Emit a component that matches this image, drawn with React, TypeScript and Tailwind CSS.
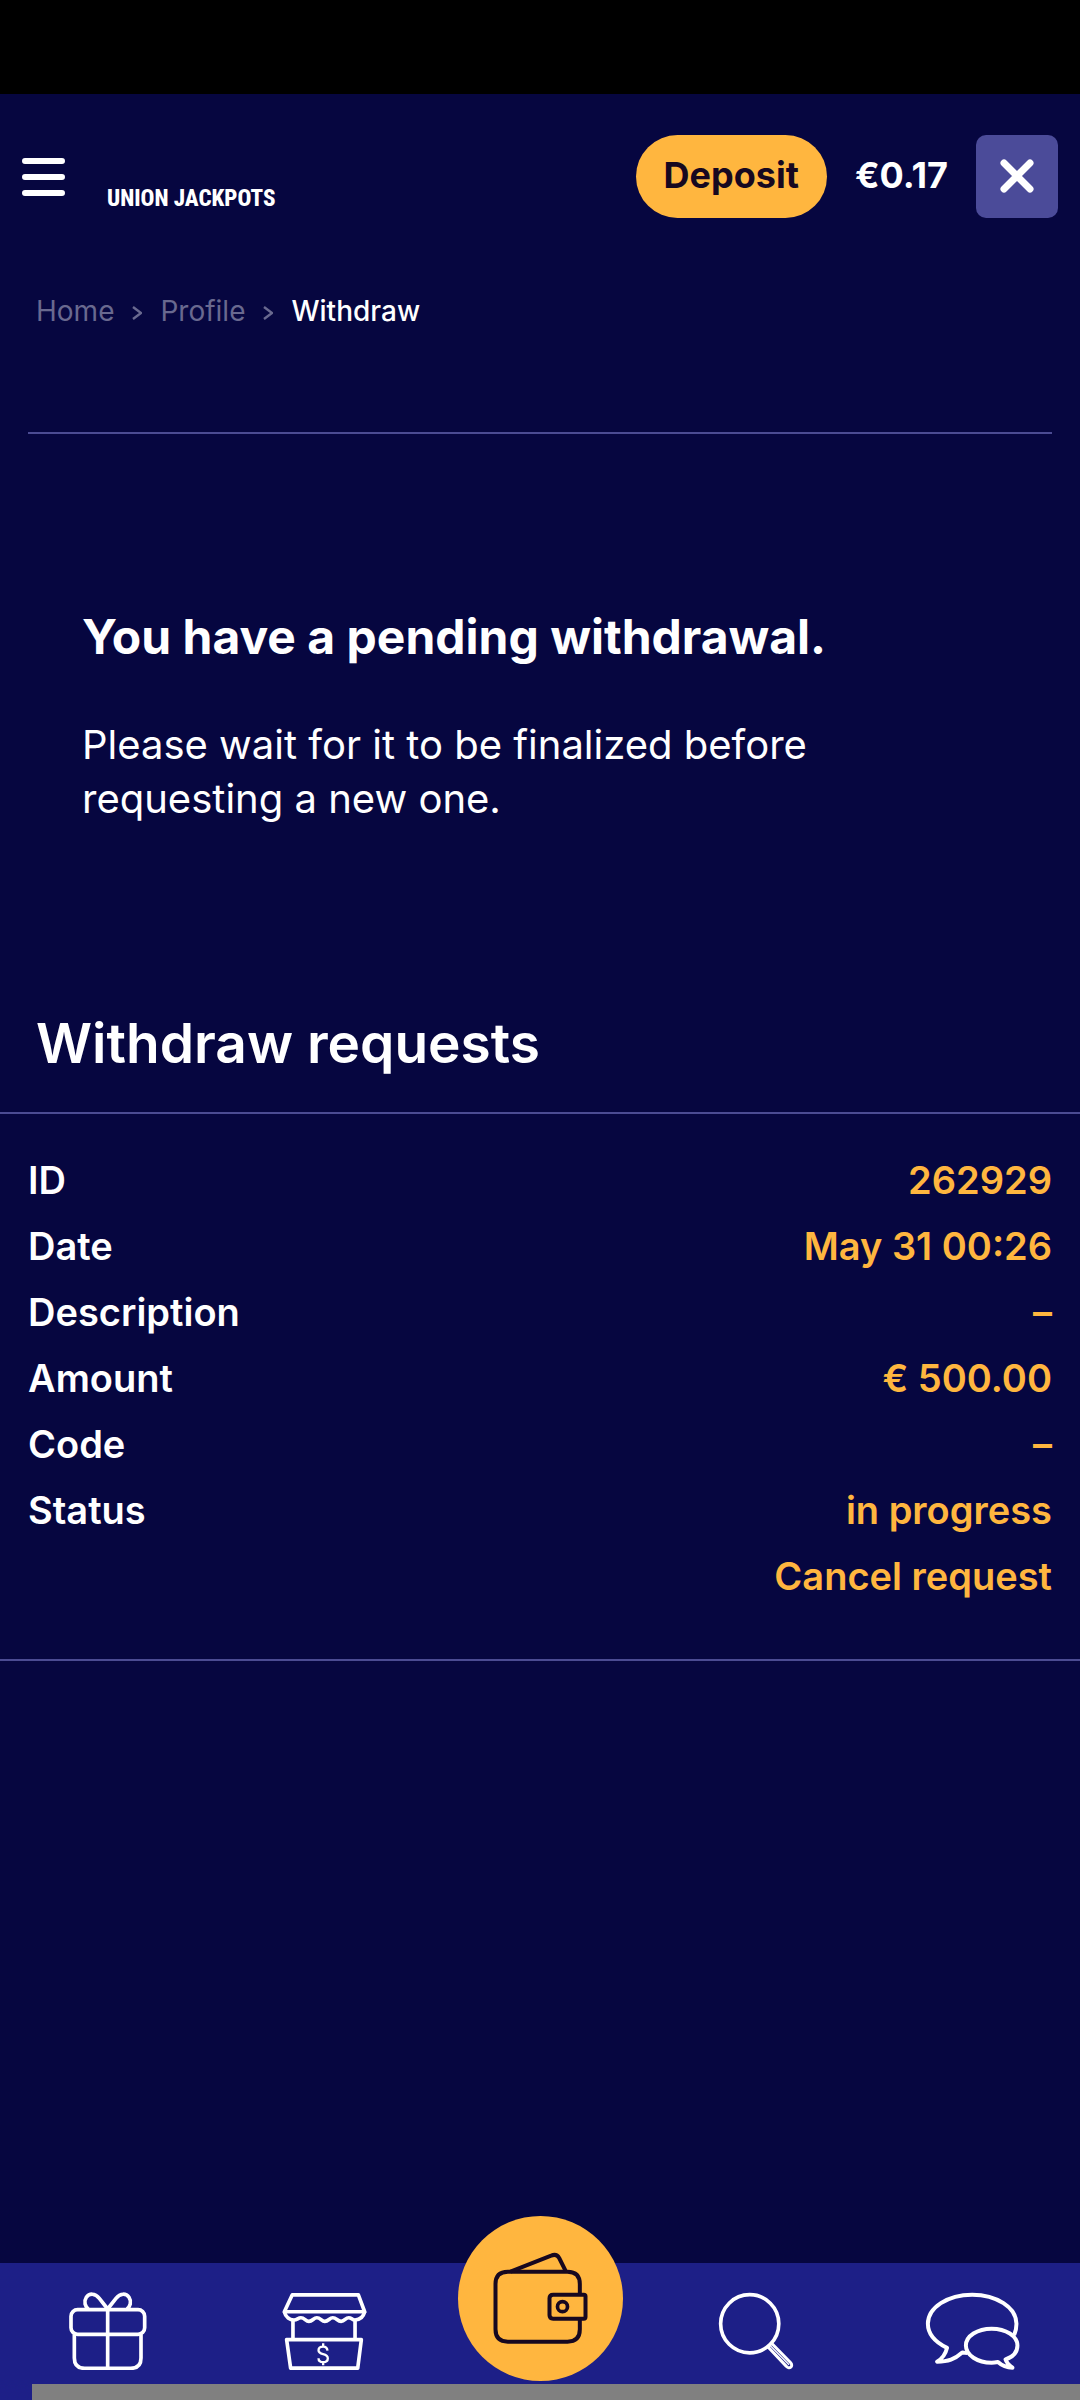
import React from "react";

const requestRows = [
  { label: "ID", value: "262929" },
  { label: "Date", value: "May 31 00:26" },
  { label: "Description", value: "–" },
  { label: "Amount", value: "€ 500.00" },
  { label: "Code", value: "–" },
  { label: "Status", value: "in progress" },
];

function MenuIcon() {
  return (
    <svg viewBox="0 0 43 38" className="w-[43px] h-[38px]" fill="none" stroke="currentColor" strokeWidth="6" strokeLinecap="round">
      <path d="M3 3H40M3 19H40M3 35H40" />
    </svg>
  );
}

function CloseIcon() {
  return (
    <svg viewBox="0 0 34 34" className="w-[34px] h-[34px]" fill="none" stroke="currentColor" strokeWidth="7" strokeLinecap="round">
      <path d="M4 4L30 30M30 4L4 30" />
    </svg>
  );
}

function Chevron() {
  return (
    <svg viewBox="0 0 10 14" className="w-[10px] h-[14px] mt-1" fill="none" stroke="currentColor" strokeWidth="2.4">
      <path d="M1 1L9 7L1 13" />
    </svg>
  );
}

function GiftIcon() {
  return (
    <svg viewBox="208 156 234 234" className="w-[78px] h-[78px]" fill="none" stroke="currentColor" strokeWidth="11" strokeLinejoin="round">
      <rect x="214" y="209" width="221" height="74" rx="20" />
      <path d="M224 283V354Q224 385 255 385H393Q424 385 424 354V283" />
      <path d="M324 209V385" />
      <path d="M324 207L299 175C286 158 268 160 260 172C251 186 257 200 266 207" />
      <path d="M324 207L349 175C362 158 380 160 388 172C397 186 391 200 382 207" />
    </svg>
  );
}

function ShopIcon() {
  return (
    <svg viewBox="844 156 256 234" className="w-[85px] h-[78px]" fill="none" stroke="currentColor" strokeWidth="11" strokeLinejoin="round">
      <path d="M875 164H1074L1093 215H851Z" />
      <path d="M851 215C855 232 868 240 880 240C890 240 892 233 901 233C912 233 915 244 925 244C936 244 939 233 949 233C960 233 963 244 973 244C984 244 987 233 997 233C1008 233 1011 244 1022 244C1033 244 1035 233 1045 233C1054 233 1054 240 1064 240C1078 239 1089 231 1093 215" />
      <path d="M877 240V298M1064 240V298" />
      <path d="M858 299H1083L1072 385H870Z" />
      <path d="M981 332C980 323 975 320 968 320C960 320 954 324 954 331C954 348 982 337 982 355C982 363 976 367 968 367C960 367 954 363 954 355M968 310V320M968 367V376" strokeWidth="7" />
    </svg>
  );
}

function WalletIcon() {
  return (
    <svg viewBox="278 184 284 276" className="w-[95px] h-[92px]" fill="none" stroke="currentColor" strokeWidth="12" strokeLinejoin="round">
      <path d="M538 312V280Q538 243 501 243H322Q285 243 285 280V416Q285 453 322 453H501Q538 453 538 416V384" />
      <path d="M330 243L452 195Q468 188 476 202L495 240" />
      <path d="M458 312H550Q555 312 555 317V379Q555 384 550 384H458Q447 384 447 373V323Q447 312 458 312Z" />
      <circle cx="486" cy="348" r="15" strokeWidth="11" />
    </svg>
  );
}

function SearchIcon() {
  return (
    <svg viewBox="114 156 228 236" className="w-[76px] h-[78px]" fill="none" stroke="currentColor" strokeLinejoin="round">
      <circle cx="209" cy="252" r="88" strokeWidth="11" />
      <path d="M263 321L320 381C329 392 342 380 333 370L276 312" strokeWidth="9" />
      <path d="M270 317L328 376" strokeWidth="4" />
    </svg>
  );
}

function ChatIcon() {
  return (
    <svg viewBox="733 156 286 236" className="w-[95px] h-[78px]" fill="none" stroke="currentColor" strokeWidth="12" strokeLinejoin="round">
      <path d="M1002 286C1007 275 1009 264 1009 252C1009 203 949 164 875 164C801 164 741 203 741 252C741 283 764 308 799 325C795 342 785 357 769 367C803 367 821 360 845 339L861 341" />
      <path d="M976 360C997 353 1012 338 1012 318C1012 289 977 267 934 267C891 267 856 289 856 318C856 347 891 370 934 370C941 370 947 369 953 368C966 380 978 385 997 385C987 378 979 370 976 360Z" />
    </svg>
  );
}

export default function App() {
  return (
    <div className="min-h-screen flex flex-col bg-[#060640] text-white font-['Inter',sans-serif]">
      {/* Status bar */}
      <div className="h-[94px] bg-black" />

      {/* Header */}
      <header className="flex items-center justify-between px-[22px] pt-[41px]">
        <div className="flex items-center gap-[42px]">
          <button type="button" aria-label="Menu">
            <MenuIcon />
          </button>
          <a href="#" className="pt-11 text-[23px] leading-7 font-extrabold font-['Roboto_Condensed','Roboto',sans-serif]">
            UNION JACKPOTS
          </a>
        </div>
        <div className="flex items-center gap-7">
          <button type="button" className="h-[83px] px-7 pb-1 rounded-full bg-[#ffb63f] text-[#170820] text-[36px] font-bold">
            Deposit
          </button>
          <span className="pb-1 text-[36px] font-bold">€0.17</span>
          <button type="button" aria-label="Close" className="w-[82px] h-[83px] pb-[2px] rounded-[10px] bg-[#4b4b99] flex items-center justify-center">
            <CloseIcon />
          </button>
        </div>
      </header>

      {/* Breadcrumb */}
      <nav aria-label="Breadcrumb" className="flex items-center gap-[18px] px-9 pt-[73px] text-[28px] leading-10 text-[#69698f]">
        <a href="#">Home</a>
        <Chevron />
        <a href="#">Profile</a>
        <Chevron />
        <span className="text-white font-medium">Withdraw</span>
      </nav>

      <main className="flex-1 pb-16">
        <hr className="mx-7 mt-[101px] border-t-2 border-[#4b4b93]" />

        {/* Pending notice */}
        <section className="px-[82px] pt-[173px]">
          <h1 className="text-[48px] leading-[60px] font-bold">You have a pending withdrawal.</h1>
          <p className="mt-[51px] max-w-[800px] text-[40px] leading-[54px]">
            Please wait for it to be finalized before requesting a new one.
          </p>
        </section>

        {/* Requests */}
        <section className="pt-[181px]">
          <h2 className="px-9 pb-[33px] text-[55px] leading-[72px] font-semibold">Withdraw requests</h2>
          <div className="border-y-2 border-[#4b4b93] px-7 pt-[33px] pb-[50px]">
            <table className="w-full text-[38px] leading-[66px] font-semibold">
              <tbody>
                {requestRows.map((row) => (
                  <tr key={row.label}>
                    <th scope="row" className="p-0 text-left font-semibold">{row.label}</th>
                    <td className="p-0 text-right text-[#ffb63f]">{row.value}</td>
                  </tr>
                ))}
                <tr>
                  <td colSpan={2} className="p-0 text-right text-[#ffb63f]">
                    <button type="button" className="block ml-auto">Cancel request</button>
                  </td>
                </tr>
              </tbody>
            </table>
          </div>
        </section>
      </main>

      {/* Bottom navigation */}
      <nav aria-label="Main" className="bg-[#1d1f87]">
        <div className="grid grid-cols-5 justify-items-center items-start h-[121px]">
          <a href="#" aria-label="Bonuses" className="pt-[29px]">
            <GiftIcon />
          </a>
          <a href="#" aria-label="Shop" className="pt-[29px]">
            <ShopIcon />
          </a>
          <a href="#" aria-label="Wallet" className="-mt-[47px] pb-[2px] size-[165px] rounded-full bg-[#ffb63f] text-[#170820] flex items-center justify-center">
            <WalletIcon />
          </a>
          <a href="#" aria-label="Search" className="pt-[29px]">
            <SearchIcon />
          </a>
          <a href="#" aria-label="Chat" className="pt-[29px]">
            <ChatIcon />
          </a>
        </div>
        <div className="ml-8 h-4 bg-[#808080]" />
      </nav>
    </div>
  );
}
